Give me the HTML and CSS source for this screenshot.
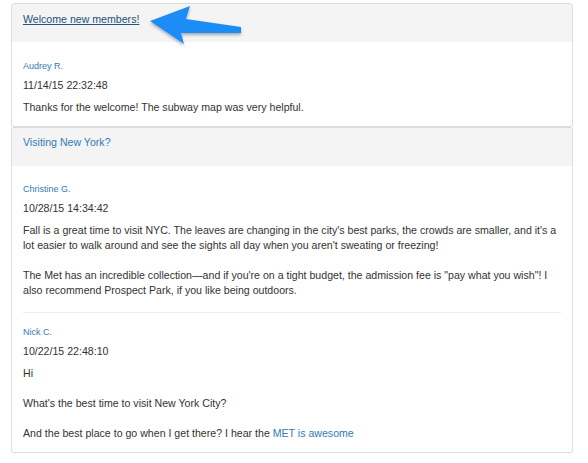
FILE: index.html
```html
<!DOCTYPE html>
<html>
<head>
<meta charset="utf-8">
<link rel="stylesheet" href="styles.css">
</head>
<body>
<div class="page">
  <div class="panel">
    <div class="panel-heading"><a class="title visited" href="#">Welcome new members!</a></div>
    <div class="panel-body">
      <div class="post">
        <a class="author" href="#">Audrey R.</a>
        <div class="date">11/14/15 22:32:48</div>
        <div class="content">
          <p>Thanks for the welcome! The subway map was very helpful.</p>
        </div>
      </div>
    </div>
  </div>
  <div class="panel">
    <div class="panel-heading"><a class="title" href="#">Visiting New York?</a></div>
    <div class="panel-body">
      <div class="post">
        <a class="author" href="#">Christine G.</a>
        <div class="date">10/28/15 14:34:42</div>
        <div class="content">
          <p>Fall is a great time to visit NYC. The leaves are changing in the city's best parks, the crowds are smaller, and it's a lot easier to walk around and see the sights all day when you aren't sweating or freezing!</p>
          <p>The Met has an incredible collection—and if you're on a tight budget, the admission fee is "pay what you wish"! I also recommend Prospect Park, if you like being outdoors.</p>
        </div>
      </div>
      <div class="post">
        <a class="author" href="#">Nick C.</a>
        <div class="date">10/22/15 22:48:10</div>
        <div class="content">
          <p>Hi</p>
          <p>What's the best time to visit New York City?</p>
          <p>And the best place to go when I get there? I hear the <a class="inline" href="#">MET is awesome</a></p>
        </div>
      </div>
    </div>
  </div>
  <svg class="arrow" width="120" height="56" viewBox="140 0 120 56">
    <defs>
      <filter id="sh" x="-20%" y="-20%" width="140%" height="160%">
        <feDropShadow dx="0" dy="2" stdDeviation="1.5" flood-color="#000" flood-opacity="0.3"/>
      </filter>
    </defs>
    <polygon points="150,21 190,6 186,19 241,27 241,33 181,33 184,44" fill="#1e8cf7" filter="url(#sh)"/>
  </svg>
</div>
</body>
</html>
```

FILE: styles.css
```css
html, body {
  margin: 0;
  padding: 0;
  background: #fff;
}
body {
  font-family: "Liberation Sans", Arial, sans-serif;
  font-size: 10.6px;
  line-height: 15px;
  color: #333;
}
.page {
  position: relative;
  padding: 3px 0 0 11px;
  width: 562px;
}
.panel {
  border: 1px solid #ddd;
  border-radius: 3px;
  background: #fff;
  box-shadow: 0 1px 1px rgba(0, 0, 0, 0.06);
  overflow: hidden;
}
.panel-heading {
  background: #f4f4f4;
  padding: 7.5px 11px 15.5px;
  height: 15px;
}
.title {
  color: #337ab7;
  text-decoration: none;
  font-size: 10.6px;
}
.title.visited {
  color: #23527c;
  text-decoration: underline;
}
.panel-body {
  padding: 17.5px 11px 11px;
}
.post + .post {
  margin-top: 14px;
  border-top: 1px solid #eee;
  padding-top: 13px;
}
.author {
  display: block;
  font-size: 9px;
  line-height: 13px;
  color: #337ab7;
  text-decoration: none;
}
.date {
  margin-top: 5px;
}
.content {
  margin-top: 7px;
}
.content p {
  margin: 0;
}
.content p + p {
  margin-top: 15px;
}
.inline {
  color: #337ab7;
  text-decoration: none;
}
.arrow {
  position: absolute;
  left: 140px;
  top: 0;
}
```
